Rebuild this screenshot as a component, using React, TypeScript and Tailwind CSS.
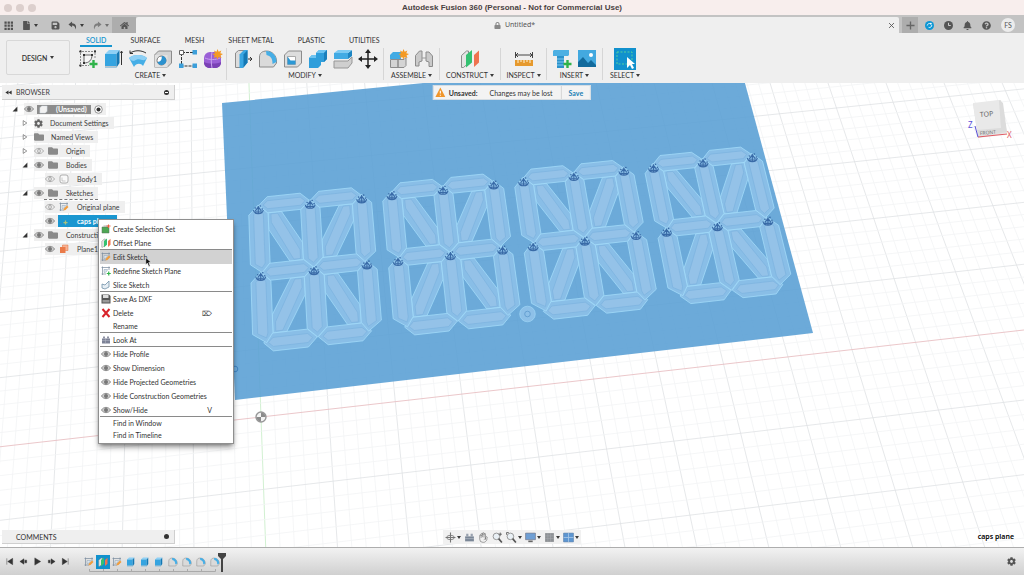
import React from "react";
import { FaBell, FaHome, FaLock, FaQuestionCircle, FaCog, FaFolder, FaFile, FaSave } from "react-icons/fa";
import { HiOutlineHandRaised } from "react-icons/hi2";

type Pt = [number, number];

// Projective map of the unit square on four screen corners
function makeProjection([p0, p1, p2, p3]: Pt[]) {
  const dx1 = p1[0] - p2[0];
  const dx2 = p3[0] - p2[0];
  const dx3 = p0[0] - p1[0] + p2[0] - p3[0];
  const dy1 = p1[1] - p2[1];
  const dy2 = p3[1] - p2[1];
  const dy3 = p0[1] - p1[1] + p2[1] - p3[1];
  const det = dx1 * dy2 - dx2 * dy1;
  const g = (dx3 * dy2 - dx2 * dy3) / det;
  const h = (dx1 * dy3 - dx3 * dy1) / det;
  const a = p1[0] - p0[0] + g * p1[0];
  const b = p3[0] - p0[0] + h * p3[0];
  const d = p1[1] - p0[1] + g * p1[1];
  const e = p3[1] - p0[1] + h * p3[1];
  return (u: number, v: number): Pt => {
    const w = g * u + h * v + 1;
    return [(a * u + b * v + p0[0]) / w, (d * u + e * v + p0[1]) / w];
  };
}

const plane = makeProjection([[222, 103], [736.5, 52], [813, 333], [235, 400]]);
const ground = makeProjection([[252, 167.6], [779.5, 113.8], [852, 349.6], [261, 417]]);

const points = (pts: Pt[]) => pts.map(([x, y]) => `${x.toFixed(1)},${y.toFixed(1)}`).join(" ");

function GridLines() {
  const lines = [];
  for (let i = -25; i <= 80; i++) {
    const u = i / 45;
    const [x1, y1] = ground(u, -0.6);
    const [x2, y2] = ground(u, 2.2);
    const color = i === 0 ? "#c5ecc5" : i % 5 === 0 ? "#dfe2e4" : "#f3f4f5";
    lines.push(<line key={`u${i}`} x1={x1} y1={y1} x2={x2} y2={y2} stroke={color} />);
  }
  for (let j = -16; j <= 44; j++) {
    const v = j / 20;
    const [x1, y1] = ground(-0.6, v);
    const [x2, y2] = ground(1.7, v);
    const color = j === 20 ? "#e6b9bd" : j % 5 === 0 ? "#dfe2e4" : "#f3f4f5";
    lines.push(<line key={`v${j}`} x1={x1} y1={y1} x2={x2} y2={y2} stroke={color} />);
  }
  return <g strokeWidth="0.8">{lines}</g>;
}

const W = 0.0175; // half width of an upright bar
const H = 0.028; // half height of a level bar
const ROWS = [0.385, 0.612, 0.837];
const COLS = [0, 0.094, 0.188];

function bar(x0: number, x1: number, y: number, k: number): Pt[] {
  const h = H * k;
  const t = 0.001 + (1 - k) * 0.016;
  const c = 0.016 * k;
  return [[x0 + t, y], [x0 + t + c, y - h], [x1 - t - c, y - h], [x1 - t, y], [x1 - t - c, y + h], [x0 + t + c, y + h]];
}

function post(x: number, y0: number, y1: number, lean: number, k: number): Pt[] {
  const w = W * k;
  const t = (1 - k) * 0.03;
  const c = 0.03 * k;
  const tip = lean * 0.01;
  return [[x - w, y0 + t + c], [x, y0 + t - 0.002], [x + w, y0 + t + c], [x + w, y1 - t - c], [x + tip, y1 - t], [x - w, y1 - t - c]];
}

function diagonal(x0: number, x1: number, y0: number, y1: number, k: number): Pt[] {
  const s = Math.sign(x1 - x0);
  const r = Math.sign(y1 - y0);
  const m = (1 - k) * 0.01;
  const a = x0 + s * (W + m);
  const b = x1 - s * (W + m);
  const c = y0 + r * (H + m);
  const d = y1 - r * (H + m);
  const wx = 0.024 * k;
  const wy = 0.058 * k;
  return [[a, c], [a + s * wx, c], [b, d - r * wy], [b, d], [b - s * wx, d], [a, c + r * wy]];
}

function segments(k: number): Pt[][] {
  const [l, m, r] = COLS;
  const [t, c, b] = ROWS;
  return [
    diagonal(l, m, t, c, k), diagonal(r, m, t, c, k), diagonal(l, m, b, c, k), diagonal(r, m, b, c, k),
    bar(l, m, t, k), bar(m, r, t, k), bar(l, m, c, k), bar(m, r, c, k), bar(l, m, b, k), bar(m, r, b, k),
    post(l, t, c, 0.3, k), post(m, t, c, 0, k), post(r, t, c, -0.3, k),
    post(l, c, b, 0.6, k), post(m, c, b, 0, k), post(r, c, b, -0.6, k),
  ];
}

function Digit({ at }: { at: number }) {
  const place = ([x, y]: Pt): Pt => plane(at + x - 0.0105 * y, y);
  return (
    <g>
      {segments(1).map((s, i) => (
        <polygon key={i} points={points(s.map(place))} fill="#8dc0e8" fillOpacity="0.9" stroke="#a2daf9" strokeWidth="0.8" />
      ))}
      {segments(0.5).map((s, i) => (
        <polygon key={i} points={points(s.map(place))} fill="#94c2e8" stroke="#78b0dd" strokeWidth="0.6" />
      ))}
      {[0.4, 0.625].map((v) =>
        COLS.map((x) => {
          const [cx, cy] = place([x, v]);
          return (
            <g key={`${v}${x}`} transform={`translate(${cx} ${cy})`} fill="#2b5c9c" stroke="#2b5c9c" opacity="0.85">
              <path d="M-5 0c1 5 9 5 10 0M-3 1l3-4 3 4M0-4v8M-4 2h8" fill="none" strokeWidth="1.1" />
              <circle cx="-3" cy="-2" r="0.8" stroke="none" />
              <circle cx="2" cy="-4" r="0.8" stroke="none" />
              <circle cx="4" cy="-1" r="0.8" stroke="none" />
            </g>
          );
        })
      )}
    </g>
  );
}

function Viewport() {
  return (
    <svg className="absolute inset-0 h-full w-full" viewBox="0 83 1024 464" preserveAspectRatio="xMidYMid slice" aria-hidden="true">
      <rect y="83" width="1024" height="464" fill="#fff" />
      <GridLines />
      <polygon points={points([plane(0, 0), plane(1, 0), plane(1, 1), plane(0, 1)])} fill="#5a9fd4" fillOpacity="0.89" />
      {[0.061, 0.3045, 0.548, 0.792].map((at) => (
        <Digit key={at} at={at} />
      ))}
      <circle cx="527.5" cy="314" r="7.8" fill="#8dc0e8" stroke="#a5dcfa" strokeWidth="0.6" />
      <circle cx="527.5" cy="314" r="2.8" fill="none" stroke="#5c98cb" strokeWidth="0.8" />
      <circle cx="235" cy="369" r="2.8" fill="none" stroke="#3f83c4" />
      <circle cx="261" cy="417" r="5" fill="#f4f4f4" stroke="#989898" strokeWidth="1.4" />
      <path d="M261 417v-4.500a4.500 4.500 0 0 1 4.500 4.500zM261 417v4.500a4.500 4.500 0 0 1-4.500-4.500z" fill="#8c8c8c" />
    </svg>
  );
}

function Icon({ size = 20, children }: { size?: number; children: React.ReactNode }) {
  return (
    <svg width={size} height={size} viewBox="0 0 20 20" fill="none" aria-hidden="true" className="shrink-0">
      {children}
    </svg>
  );
}

const Caret = () => (
  <svg width="4" height="3" viewBox="0 0 4 3" aria-hidden="true" className="shrink-0">
    <path d="M0 0h4L2 3z" fill="#3c3c3c" />
  </svg>
);

const Plus = () => <path d="M15.500 11v8M11.500 15h8" stroke="#2fb34a" strokeWidth="2.4" />;
const Spark = () => (
  <path d="M14.500 0l1.200 2.800 2.600-1.300-1 2.800 2.700.8-2.500 1.300 1 2.600-2.800-1-1.200 2.500-1.200-2.500-2.600 1 1-2.600L9.500 5.100l2.500-.8-1-2.800 2.500 1.300z" fill="#f49a24" />
);

const SketchShape = () => (
  <>
    <path d="M2.500 1v17M1 2.500h17M1 16.500h10M17 1v9" stroke="#8a8a8a" strokeDasharray="2 1" />
    <path d="M6 6h8c0 5-3 8-8 8z" stroke="#666" fill="#f7f7f7" />
    <path d="M5 5h2v2H5zM13 5h2v2h-2zM5 13h2v2H5zM1.500 1.500h2v2h-2zM16 1.500h2v2h-2zM1.500 15.500h2v2h-2z" fill="#333" />
  </>
);
const SmallSketchShape = () => (
  <>
    <path d="M3 1v17M1 3h17M1 16h9M16 1v7" stroke="#7d8fa0" strokeWidth="1.500" />
    <path d="M6 7h7c-1 4-3 6-7 6z" fill="#dbe4ec" stroke="#8ba0b4" />
  </>
);
const BoxShape = () => (
  <>
    <path d="M2 5l4-4h10.500l-3 4z" fill="#8ed0f5" />
    <path d="M2 5h11.500v13.500H2z" fill="#35a4e0" />
    <path d="M13.500 5l3-4v13l-3 4.500z" fill="#1478b4" />
    <path d="M2 17h11.500v1.500H2z" fill="#b9c4cc" />
  </>
);
const FilletShape = () => (
  <>
    <path d="M1.500 18V8c0-4 3-6 7-6 6 0 10 5 10 10v2l-3 4z" fill="#dadada" stroke="#8a8a8a" />
    <path d="M8 2c6 0 10.500 4 10.500 11l-4 2c0-6-2-8-6-9z" fill="#46aee6" />
  </>
);
const PlanesShape = () => (
  <>
    <path d="M1.500 6.500l5-4.500h2v12l-5 4.500h-2z" fill="#e4e4e4" stroke="#8c8c8c" />
    <path d="M6 6l6-5v12.500l-6 5z" fill="#34c171" />
    <path d="M14 6l5-4.500v12L14 18z" fill="#ee7350" />
  </>
);
const Pencil = () => <path d="M9 17l1-4 6-6 3 3-6 6z" fill="#f09c3c" />;

const CREATE = [
  { name: "Create Sketch", art: <><SketchShape /><Plus /></> },
  { name: "Extrude", art: <><BoxShape /><path d="M18.500 3v13M17.500 4l1-2 1 2" stroke="#333" /></> },
  { name: "Revolve", art: <><path d="M1 9c4-4 14-4 18 0l-4 8c-2-3-7-3-9 1z" fill="#46aee6" /><path d="M1 9c4-4 14-4 18 0-2 3-4 2-5 2-3-1-5-1-8 1-2 0-4-1-5-3z" fill="#8ed0f5" /><path d="M2 4c5-3 11-3 16 0M2 1.500v3h3" stroke="#333" /></> },
  { name: "Hole", art: <><path d="M1.500 6l4-4h13v12l-4 4h-13z" fill="#d4d4d4" stroke="#8c8c8c" /><path d="M1.500 6h13v12h-13z" fill="#e2e2e2" /><circle cx="8.500" cy="11.500" r="4.500" fill="#fff" stroke="#777" /><path d="M8.500 7a4.500 4.500 0 1 1-4 6c3 0 5-3 4-6z" fill="#2c92cf" /></> },
  { name: "Pattern", art: <><path d="M4 3.500h12M3.500 4v13h13" stroke="#333" strokeDasharray="3 1" /><path d="M14.500 1h4.500v4.500h-4.500zM1 14.500h4.500V19H1zM14.500 14.500H19V19h-4.500z" fill="#3c9fda" /><path d="M1.500 1.500h4v4h-4z" fill="#fff" stroke="#666" /></> },
  { name: "Create Form", art: <><rect x="1" y="3" width="17" height="16" rx="6" fill="#9a5fd6" /><path d="M1 13c4 2 13 2 17 0v1c0 3-3 5-6 5H7c-3 0-6-2-6-5z" fill="#7a41b5" /><path d="M2 9c4 2 11 2 15 0M9 3c-1 5-1 11 0 16" stroke="#c7a3ee" /><Spark /></> },
];
const MODIFY = [
  { name: "Press Pull", art: <><path d="M2.500 4l3-2.500h8L10 5v13.500H2.500z" fill="#dcdcdc" stroke="#8c8c8c" /><path d="M6.500 5.500L11 1h3.500v12.500L10 19H6.500z" fill="#3aa6e2" /><path d="M10.500 5.500l4-4.500v12.500l-4 5z" fill="#1478b4" /><path d="M15 10h4M17 8l2 2-2 2" stroke="#333" /></> },
  { name: "Fillet", art: <FilletShape /> },
  { name: "Shell", art: <><path d="M1.500 6l4-4h13v12l-4 4h-13z" fill="#ddd" stroke="#8c8c8c" /><path d="M4.500 7.500h8v8h-8z" fill="#fff" stroke="#aaa" /><path d="M4.500 7.500l3 4h5v4h-8z" fill="#2c98d5" /></> },
  { name: "Combine", art: <><path d="M1 9l3-3h4V4l3-3h8v9l-3 3h-3v3l-3 3H1z" fill="#2f9edb" /><path d="M8 4l3-3h8l-3 3zM1 9l3-3h4v3z" fill="#6cc3f1" /><path d="M16 4l3-3v9l-3 3z" fill="#1a7fbc" /></> },
  { name: "Offset Face", art: <><path d="M1 12h14l4-4v6l-4 5H1z" fill="#cfcfcf" stroke="#979797" /><path d="M1 4h14v6H1z" fill="#42abe4" /><path d="M15 4l4-3v6l-4 3z" fill="#1d85c2" /><path d="M1 4l4-3h14l-4 3z" fill="#7ecbf3" /></> },
  { name: "Move", art: <><path d="M10 2v16M2 10h16" stroke="#222" strokeWidth="1.500" /><path d="M10 0l3 4H7zM10 20l3-4H7zM0 10l4-3v6zM20 10l-4-3v6z" fill="#222" /></> },
];
const ASSEMBLE = [
  { name: "New Component", art: <><path d="M1 6l3-3h8v7H1z" fill="#42abe4" /><path d="M1.500 10.500H9v8H1.500zM9 10.500h6l2-2v8l-2 2H9z" fill="#d4d4d4" stroke="#8c8c8c" /><Spark /></> },
  { name: "Joint", art: <><path d="M1.500 17V6.500l4-4.500h2.500v10L5 13v4zM18.500 17.500V7L15 3h-3v9l3 1v4.500z" fill="#cacaca" stroke="#8c8c8c" /><path d="M8 9h4" stroke="#999" /></> },
];
const INSPECT = [{ name: "Measure", art: <><path d="M1 11h18v6H1z" fill="#e6992d" /><path d="M4 11v3M7 11v2M10 11v3M13 11v2M16 11v3" stroke="#fff3d6" /><path d="M1.500 3v6M18.500 3v6M2 6h16M4 4L2 6l2 2M16 4l2 2-2 2" stroke="#444" /></> }];
const INSERT = [
  { name: "Insert McMaster", art: <><path d="M1 2l1-1h15v5l-1 1H1z" fill="#4db0e3" /><path d="M5 7h7v12H5z" fill="#2c92cb" /><path d="M5 10h7M5 13h7M5 16h7" stroke="#7cc8ee" /><Plus /></> },
  { name: "Canvas", art: <><path d="M1 1h18v17H1z" fill="#43a9df" /><path d="M1 18v-5l5-5 5 6 3-3 5 5v2z" fill="#126a9c" /><circle cx="14" cy="6" r="2" fill="#fff" /></> },
];

type Tool = { name: string; art: React.ReactNode };

function ToolGroup({ label, tools, className }: { label: string; tools: Tool[]; className: string }) {
  return (
    <div className={`my-px flex shrink-0 flex-col items-center border-r border-[#d6d6d6] ${className}`}>
      <div className="flex h-[22px] items-center">
        {tools.map((tool) => (
          <button key={tool.name} aria-label={tool.name} className="flex w-[25px] justify-center">
            <Icon>{tool.art}</Icon>
          </button>
        ))}
      </div>
      <button className="flex h-[10px] items-center gap-[2px] whitespace-nowrap">
        {label} <Caret />
      </button>
    </div>
  );
}

const TABS = ["SOLID", "SURFACE", "MESH", "SHEET METAL", "PLASTIC", "UTILITIES"];

function Header() {
  return (
    <header className="bg-[#efefef]">
      <div className="relative flex h-[15px] items-center justify-center bg-[#f8eeed]">
        <div className="absolute left-1 flex gap-1">
          <i className="h-2 w-2 rounded-full bg-[#dccfcd]" />
          <i className="h-2 w-2 rounded-full bg-[#dccfcd]" />
          <i className="h-2 w-2 rounded-full bg-[#dccfcd]" />
        </div>
        <h1 className="font-['Liberation_Sans',sans-serif] text-[8px] leading-[12px] font-bold text-[#4a4242]">
          Autodesk Fusion 360 (Personal - Not for Commercial Use)
        </h1>
      </div>
      <div className="flex h-[18px] border-t-2 border-[#c3c3c3] bg-[#c3c3c3] text-[#555]">
        <div className="flex w-28 items-center justify-between pr-[3px] pl-1">
          <button aria-label="Data panel">
            <Icon size={9}>
              <path d="M1 1h5v5H1zM8 1h5v5H8zM15 1h5v5h-5zM1 8h5v5H1zM8 8h5v5H8zM15 8h5v5h-5zM1 15h5v5H1zM8 15h5v5H8zM15 15h5v5h-5z" fill="#505050" />
            </Icon>
          </button>
          <button aria-label="File" className="flex items-center gap-[3px]"><FaFile size={9} /><Caret /></button>
          <button aria-label="Save" className="ml-1"><FaSave size={9} /></button>
          <button aria-label="Undo" className="flex items-center gap-[3px]">
            <Icon size={9}><path d="M9 1L1 8l8 6v-4c5 0 7 3 8 9 3-9-1-13-8-14z" fill="#505050" /></Icon>
            <Caret />
          </button>
          <button aria-label="Redo" className="flex items-center gap-[3px] opacity-60">
            <Icon size={9}><path d="M11 1l8 7-8 6v-4c-5 0-7 3-8 9-3-9 1-13 8-14z" fill="#505050" /></Icon>
            <Caret />
          </button>
        </div>
        <button aria-label="Home" className="flex w-6 items-center justify-center bg-[#adadad]"><FaHome size={9} /></button>
        <div className="relative flex flex-1 items-center justify-center gap-1 rounded-t-xs bg-[#efefef] pr-[6px] font-['Noto_Sans',sans-serif] text-[7px]">
          <FaLock size={7} className="text-[#888]" />
          <span>Untitled*</span>
          <button aria-label="Close tab" className="absolute right-1"><Icon size={7}><path d="M3 3l14 14M17 3L3 17" stroke="#555" strokeWidth="2.500" /></Icon></button>
        </div>
        <button aria-label="New design" className="ml-[3px] flex w-4 items-center justify-center bg-[#adadad]">
          <Icon size={9}><path d="M10 1v18M1 10h18" stroke="#666" strokeWidth="3" /></Icon>
        </button>
        <div className="flex items-center gap-[10px] pr-[9px] pl-[7px]">
          <button aria-label="Extensions">
            <Icon size={9}><circle cx="10" cy="10" r="10" fill="#0d97d5" /><path d="M5 10a5 5 0 0 1 7-4M15 9a5 5 0 0 1-7 5" stroke="#fff" strokeWidth="2" /><circle cx="13" cy="6" r="2" fill="#fff" /></Icon>
          </button>
          <button aria-label="Job status">
            <Icon size={9}><circle cx="10" cy="10" r="10" fill="#555" /><path d="M10 4v6h5" stroke="#ddd" strokeWidth="2" /></Icon>
          </button>
          <button aria-label="Notifications"><FaBell size={9} /></button>
          <button aria-label="Help"><FaQuestionCircle size={9} /></button>
          <button className="flex h-[14px] w-[14px] items-center justify-center rounded-full bg-[#ececec] text-[7px]">FS</button>
        </div>
      </div>
      <div className="flex h-[50px] overflow-hidden">
        <button className="mt-[7px] ml-[6px] flex h-[35px] w-16 shrink-0 items-center justify-center gap-[3px] rounded-xs border border-[#d8d8d8] font-semibold">
          DESIGN <Caret />
        </button>
        <div className="ml-[5px] flex flex-col">
          <nav className="flex h-[14px] gap-3 pt-px pl-[5px]">
            {TABS.map((tab) => (
              <button
                key={tab}
                className={tab === "SOLID" ? "border-b-2 border-[#1595cf] px-[6px] font-semibold text-[#1595cf]" : "border-b-2 border-transparent px-[6px]"}
              >
                {tab}
              </button>
            ))}
          </nav>
          <div className="flex">
            <ToolGroup label="CREATE" tools={CREATE} className="w-[152px]" />
            <ToolGroup label="MODIFY" tools={MODIFY} className="w-[157px]" />
            <ToolGroup label="ASSEMBLE" tools={ASSEMBLE} className="w-14" />
            <ToolGroup label="CONSTRUCT" tools={[{ name: "Offset Plane", art: <PlanesShape /> }]} className="w-[61px]" />
            <ToolGroup label="INSPECT" tools={INSPECT} className="w-[46px]" />
            <ToolGroup label="INSERT" tools={INSERT} className="w-14" />
            <div className="my-px flex w-11 flex-col items-center">
              <button aria-label="Select" className="flex h-[22px] w-[22px] items-center justify-center bg-[#1191cd]">
                <Icon>
                  <path d="M2 3h15v12H2z" stroke="#55d0a0" strokeDasharray="2 1.500" />
                  <path d="M12 8v11l3-3 2 4 2-1-2-4h3z" fill="#fff" />
                </Icon>
              </button>
              <button className="flex h-[10px] items-center gap-[2px]">SELECT <Caret /></button>
            </div>
          </div>
        </div>
      </div>
    </header>
  );
}

function Eye({ off }: { off?: boolean }) {
  return (
    <Icon size={10}>
      <path d="M1 10c4-7 14-7 18 0-4 7-14 7-18 0z" fill={off ? "#f4f4f4" : "#d2d2d2"} stroke={off ? "#a5a5a5" : "#858585"} strokeWidth="1.800" />
      <circle cx="10" cy="10" r="3.500" fill={off ? "none" : "#777"} stroke={off ? "#a5a5a5" : "#777"} strokeWidth="1.500" />
      {off && <path d="M10 4v12" stroke="#a5a5a5" strokeWidth="1.500" />}
    </Icon>
  );
}

function Arrow({ open }: { open?: boolean }) {
  return (
    <Icon size={6}>
      {open ? <path d="M18 2v16H2z" fill="#333" /> : <path d="M4 2l12 8-12 8z" stroke="#555" strokeWidth="2" />}
    </Icon>
  );
}

const Folder = () => <FaFolder size={10} className="shrink-0 text-[#8a8a8a]" />;
const BodyIcon = () => <Icon size={10}><rect x="2" y="2" width="16" height="16" rx="4" fill="#fafafa" stroke="#999" strokeWidth="1.500" /><path d="M6 7v7h7" stroke="#999" /></Icon>;
const SketchIcon = () => <Icon size={10}><SmallSketchShape /><Pencil /></Icon>;

type TreeNode = { label: string; deep?: boolean; open?: boolean; eye?: "on" | "off"; icon: React.ReactNode; selected?: boolean; dashed?: boolean };

const NODES: TreeNode[] = [
  { label: "Document Settings", icon: <FaCog size={9} className="text-[#666]" /> },
  { label: "Named Views", icon: <Folder /> },
  { label: "Origin", eye: "off", icon: <Folder /> },
  { label: "Bodies", eye: "on", open: true, icon: <Folder /> },
  { label: "Body1", deep: true, eye: "off", icon: <BodyIcon /> },
  { label: "Sketches", eye: "on", open: true, icon: <Folder />, dashed: true },
  { label: "Original plane", deep: true, eye: "off", icon: <SketchIcon /> },
  { label: "caps plane", deep: true, eye: "on", icon: <Icon size={10}><path d="M4 4h2M4 15h2" stroke="#4e7fb5" strokeWidth="2" /><path d="M13 9v8M9 13h8" stroke="#a9c27c" strokeWidth="2.500" /></Icon>, selected: true },
  { label: "Construction", eye: "on", open: true, icon: <Folder /> },
  { label: "Plane1", deep: true, eye: "on", icon: <Icon size={10}><path d="M7 2h11v11H7z" fill="#f7b294" stroke="#e2703f" /><path d="M2 6h11v12H2z" fill="#ea7a49" /></Icon> },
];

function Browser() {
  return (
    <section className="relative w-[175px] leading-[12px] text-[#3c3c3c]">
      <div className="mt-[2px] ml-[2px] flex h-[15px] items-center border-r border-b border-[#cfcfcf] bg-[#efefef] px-[3px]">
        <Icon size={7}><path d="M10 4v12L1 10zM19 4v12l-9-6z" fill="#333" /></Icon>
        <h2 className="ml-1 flex-1">BROWSER</h2>
        <button aria-label="Collapse browser" className="mr-[2px] flex h-[5px] w-[5px] items-center justify-center rounded-full bg-[#333]">
          <i className="h-px w-[3px] bg-white" />
        </button>
      </div>
      <ul>
        <li className="mt-[2px] flex h-[14px] items-center pl-3">
          <Arrow open />
          <div className="ml-[6px] flex h-[12px] items-center gap-[3px] bg-[#efefef] pr-[3px]">
            <Eye />
            <span className="flex h-[9px] items-center gap-[8px] bg-[#8c8c8c] pr-1 pl-[2px] font-bold text-white">
              <Icon size={9}><path d="M2 6l4-4h12v12l-4 4H2z" fill="#f2f2f2" stroke="#c8d4dd" /></Icon>
              (Unsaved)
            </span>
            <Icon size={9}><circle cx="10" cy="10" r="8.500" fill="#fff" stroke="#888" strokeWidth="2" /><circle cx="10" cy="10" r="4.500" fill="#333" /></Icon>
          </div>
        </li>
        {NODES.map((node) => (
          <li key={node.label} className={`flex h-[14px] items-center ${node.deep ? "pl-[45px]" : "pl-[22px]"}`}>
            {!node.deep && <span className="mr-[6px] flex"><Arrow open={node.open} /></span>}
            <div className="flex h-[12px] items-center bg-[#efefef]">
              {node.eye && <Eye off={node.eye === "off"} />}
              <div
                className={
                  node.selected
                    ? "ml-[3px] flex h-[12px] w-[59px] items-center gap-2 bg-[#1a96d0] pl-px font-bold whitespace-nowrap text-white"
                    : `flex items-center pr-[5px] ${node.eye ? "gap-2 pl-1" : "gap-[7px]"} ${node.dashed ? "border-b border-dashed border-[#777]" : ""}`
                }
              >
                {node.icon}
                <span>{node.label}</span>
              </div>
            </div>
          </li>
        ))}
      </ul>
    </section>
  );
}

type MenuEntry = { label: string; icon?: React.ReactNode; keys?: string; active?: boolean; rule?: boolean };

const MENU: MenuEntry[] = [
  { label: "Create Selection Set", icon: <Icon size={10}><path d="M2 6h14v12H2z" fill="#4ea654" stroke="#54705a" /><path d="M5 4h10" stroke="#666" /><path d="M15 1v7M11 4h8" stroke="#e8603c" strokeWidth="2" /></Icon> },
  { label: "Offset Plane", icon: <Icon size={10}><PlanesShape /></Icon>, rule: true },
  { label: "Edit Sketch", icon: <SketchIcon />, active: true },
  { label: "Redefine Sketch Plane", icon: <Icon size={10}><SmallSketchShape /><Plus /></Icon> },
  { label: "Slice Sketch", icon: <Icon size={10}><path d="M2 8l6 2 8-8v12l-8 4-6-2z" fill="#e6eef4" stroke="#6a8ba4" strokeWidth="1.500" /></Icon>, rule: true },
  { label: "Save As DXF", icon: <Icon size={10}><path d="M1 1h15l3 3v15H1z" fill="#555" /><path d="M4 2h11v6H4z" fill="#ddd" /><path d="M3 12h14v5H3z" fill="#999" /></Icon> },
  { label: "Delete", icon: <Icon size={10}><path d="M3 2l14 16M17 2L3 18" stroke="#d8232a" strokeWidth="4" /></Icon>, keys: "⌦" },
  { label: "Rename", rule: true },
  { label: "Look At", icon: <Icon size={10}><path d="M2 7h16v10H2z" fill="#7d8296" /><path d="M4 3h4v4H4zM12 3h4v4h-4z" fill="#8f93a5" /><path d="M2 11h16M9 7v10" stroke="#b9bccb" /></Icon>, rule: true },
  { label: "Hide Profile", icon: <Eye /> },
  { label: "Show Dimension", icon: <Eye /> },
  { label: "Hide Projected Geometries", icon: <Eye /> },
  { label: "Hide Construction Geometries", icon: <Eye /> },
  { label: "Show/Hide", icon: <Eye />, keys: "V", rule: true },
  { label: "Find in Window" },
  { label: "Find in Timeline" },
];

function ContextMenu() {
  return (
    <div className="absolute top-[136px] left-[98px] w-[136px] border border-[#8f8f8f] bg-white px-px py-[2px] shadow-md shadow-black/40">
      <ul className="leading-[12px]">
        {MENU.map((item) => (
          <li key={item.label} className={item.rule ? "border-b border-[#8a8a8a]" : ""}>
            <button
              className={`flex w-full items-center pr-5 pl-px text-left whitespace-nowrap ${!item.icon ? "h-[12px]" : item.rule ? "h-[13px]" : "h-[14px]"} ${item.active ? "bg-[#d2d2d2]" : ""}`}
            >
              <span className="flex w-3 shrink-0">{item.icon}</span>
              <span className="flex-1">{item.label}</span>
              <span>{item.keys}</span>
            </button>
          </li>
        ))}
      </ul>
      <svg width="7" height="10" viewBox="0 0 12 18" className="absolute top-[37px] left-[46px]" aria-hidden="true">
        <path d="M1 1v13l3-3 2.500 6 2.500-1-2.500-6h4.500z" fill="#111" stroke="#fff" />
      </svg>
    </div>
  );
}

function ViewCube() {
  return (
    <svg width="48" height="46" viewBox="0 0 48 46" className="absolute top-4 right-2" aria-label="View cube">
      <path d="M5 5l28-4 6 33-29 5z" fill="#d2d2d2" opacity="0.6" />
      <path d="M5 4l26-3 2 28-24 3z" fill="#e9e9e9" />
      <path d="M31 1l4 3 4 29-29 4-1-6 24-2z" fill="#dcdcdc" />
      <path d="M10 38l29-3" stroke="#e05a62" />
      <path d="M10 38L7 27" stroke="#5a50d8" />
      <text x="12" y="18" transform="rotate(-4 12 18)" className="font-['Noto_Sans',sans-serif] text-[7px]" fill="#666">TOP</text>
      <text x="12" y="36" transform="rotate(-5 12 36)" className="font-['Noto_Sans',sans-serif] text-[5px]" fill="#777">FRONT</text>
      <text x="0" y="29" className="font-['Noto_Sans',sans-serif] text-[8px]" fill="#5a50d8">Z</text>
      <text x="39" y="39" className="font-['Noto_Sans',sans-serif] text-[8px]" fill="#e05a62">X</text>
    </svg>
  );
}

const Magnifier = ({ mark }: { mark: string }) => (
  <Icon size={11}><circle cx="8" cy="8" r="6" fill="#e9f0f5" stroke="#888" strokeWidth="1.500" /><path d="M12 12l6 7" stroke="#555" strokeWidth="3" /><path d={mark} stroke="#555" strokeWidth="1.500" /></Icon>
);

const VIEW_TOOLS = [
  { name: "Orbit", menu: true, art: <Icon size={11}><path d="M10 1v18M1 10h18" stroke="#777" strokeWidth="2" /><ellipse cx="10" cy="10" rx="7" ry="4" stroke="#777" strokeWidth="1.500" /></Icon> },
  { name: "Look At", art: <Icon size={11}><path d="M2 8h16v9H2z" fill="#7b8797" /><path d="M4 3h4v5H4zM12 3h4v5h-4z" fill="#99a2af" /><path d="M2 12h16" stroke="#c3c9d1" /></Icon> },
  { name: "Pan", art: <HiOutlineHandRaised size={11} className="text-[#777]" /> },
  { name: "Zoom", art: <Magnifier mark="M15 1v6M12 4h6" /> },
  { name: "Fit", menu: true, art: <Magnifier mark="M1 1h4M1 1v4" /> },
  { name: "Display Settings", menu: true, art: <Icon size={11}><path d="M1 2h18v12H1z" fill="#6f9fd4" stroke="#667" /><path d="M6 17h8" stroke="#666" strokeWidth="3" /></Icon> },
  { name: "Grid and Snaps", menu: true, art: <Icon size={11}><path d="M2 2h16v16H2z" fill="#8d9094" /><path d="M2 7h16M2 12h16M7 2v16M12 2v16" stroke="#a8abb0" /></Icon> },
  { name: "Viewports", menu: true, art: <Icon size={11}><path d="M1 2h18v16H1z" fill="#5d96d1" stroke="#5078a3" /><path d="M10 2v16M1 10h18" stroke="#a9c8e8" strokeWidth="1.500" /></Icon> },
];

const STEPS = ["sketch", "plane", "sketch", "box", "box", "box", "fillet", "fillet", "fillet", "fillet"];

function Timeline() {
  const transport = [
    { name: "Go to start", d: "M4 3v14M17 3v14L6 10z" },
    { name: "Step back", d: "M11 4v12L2 10zM13 7h4v6h-4z" },
    { name: "Play", d: "M4 2v16l13-8z" },
    { name: "Step forward", d: "M9 4v12l9-6zM3 7h4v6H3z" },
    { name: "Go to end", d: "M16 3v14M3 3v14l11-7z" },
  ];
  return (
    <footer className="flex h-7 items-center border-t border-[#adadad] bg-linear-to-b from-[#f2f2f2] to-[#d0d0d0] px-1">
      <div className="flex gap-1">
        {transport.map((t) => (
          <button key={t.name} aria-label={t.name} className="flex w-[10px] justify-center">
            <Icon size={9}><path d={t.d} fill="#333" stroke="#333" /></Icon>
          </button>
        ))}
      </div>
      <div className="relative ml-3 flex">
        {STEPS.map((step, i) => (
          <button key={i} aria-label={`${step} ${i + 1}`} className={`flex h-[14px] w-[14px] items-center justify-center ${i === 1 ? "bg-[#1191cd]" : ""}`}>
            <Icon size={10}>
              {step === "sketch" && <><SmallSketchShape /><Pencil /></>}
              {step === "plane" && <PlanesShape />}
              {step === "box" && <BoxShape />}
              {step === "fillet" && <FilletShape />}
            </Icon>
          </button>
        ))}
        <svg width="144" height="20" className="absolute top-[-2px] left-0" aria-hidden="true">
          <path d="M7.500 16v2.500h126V16M21.500 16v2M35.500 16v2M49.500 16v2M63.500 16v2M77.500 16v2M91.500 16v2M105.500 16v2M119.500 16v2" fill="none" stroke="#aaa" />
          <path d="M136 0h8v3l-3 3v13h-2V6l-3-3z" fill="#444" />
        </svg>
      </div>
      <button aria-label="Timeline settings" className="mr-1 ml-auto text-[#555]"><FaCog size={9} /></button>
    </footer>
  );
}

export default function App() {
  return (
    <div className="flex h-screen flex-col overflow-hidden bg-white font-['Lato',sans-serif] text-[7px] leading-[10px] text-[#333]">
      <Header />
      <main className="relative flex flex-1 flex-col justify-between overflow-hidden">
        <Viewport />
        <Browser />
        <div className="absolute top-[2px] left-1/2 flex h-[15px] -translate-x-1/2 items-center border border-[#d5dde3] bg-[#f3f3f3] whitespace-nowrap">
          <span className="pl-px"><Icon size={11}><path d="M10 1l9 17H1z" fill="#f0952a" /><path d="M10 7v5M10 14v2" stroke="#fff" strokeWidth="2" /></Icon></span>
          <strong className="ml-[3px] font-bold">Unsaved:</strong>
          <span className="mr-2 ml-3">Changes may be lost</span>
          <button className="h-full border-l border-[#d5d5d5] px-[7px] font-bold text-[#2080b4]">Save</button>
        </div>
        <ViewCube />
        <ContextMenu />
        <div className="relative mb-[3px] flex items-center">
          <section className="ml-[2px] flex h-[14px] w-[173px] items-center border-r border-b border-[#cfcfcf] bg-[#efefef] pr-[5px] pl-[14px]">
            <h2 className="flex-1">COMMENTS</h2>
            <button aria-label="Add comment" className="h-[5px] w-[5px] rounded-full bg-[#333]" />
          </section>
          <div className="absolute left-1/2 flex h-[14px] -translate-x-1/2 items-center gap-[3px] bg-[#f1f1f1] px-[2px]">
            {VIEW_TOOLS.map((tool) => (
              <button key={tool.name} aria-label={tool.name} className="flex items-center gap-px">
                {tool.art}
                {tool.menu && <Caret />}
              </button>
            ))}
          </div>
          <span className="mr-[10px] ml-auto font-['Noto_Sans',sans-serif] font-semibold text-black">caps plane</span>
        </div>
      </main>
      <Timeline />
    </div>
  );
}
